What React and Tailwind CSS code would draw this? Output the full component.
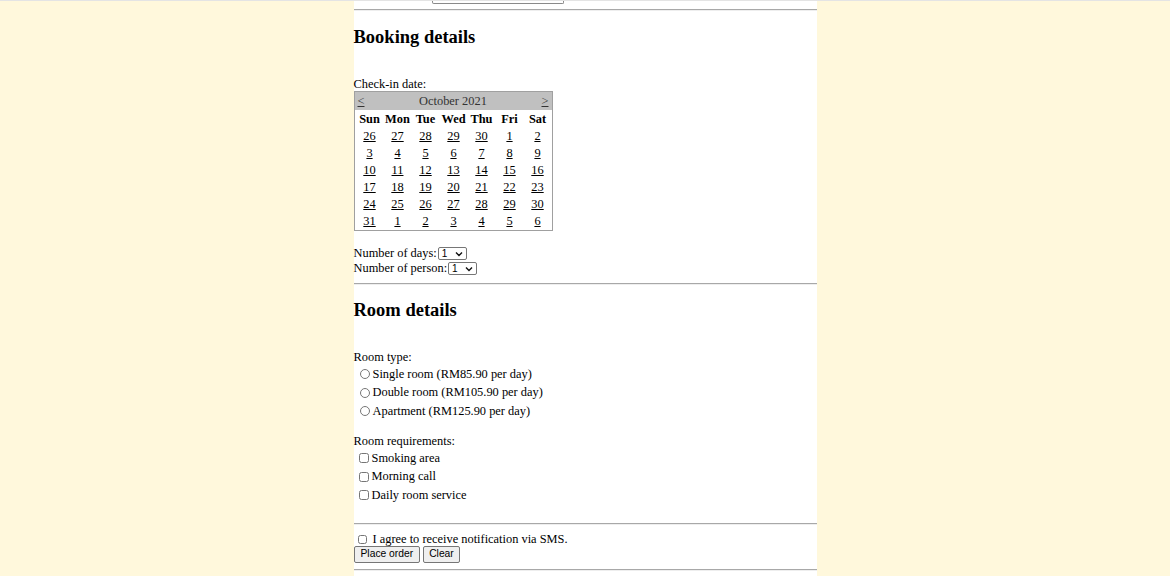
import React from 'react';

const days = ['Sun', 'Mon', 'Tue', 'Wed', 'Thu', 'Fri', 'Sat'];
const weeks = [
  [26, 27, 28, 29, 30, 1, 2],
  [3, 4, 5, 6, 7, 8, 9],
  [10, 11, 12, 13, 14, 15, 16],
  [17, 18, 19, 20, 21, 22, 23],
  [24, 25, 26, 27, 28, 29, 30],
  [31, 1, 2, 3, 4, 5, 6],
];

const rooms = [
  'Single room (RM85.90 per day)',
  'Double room (RM105.90 per day)',
  'Apartment (RM125.90 per day)',
];

const needs = ['Smoking area', 'Morning call', 'Daily room service'];

function Rule({ className = '' }) {
  return <div className={`h-[2px] border-t border-b border-t-[#a8a8a8] border-b-[#eeeeee] ${className}`} />;
}

function FakeSelect({ width }) {
  return (
    <span
      className={`inline-flex items-center justify-between h-[13px] ${width} ml-[1px] border border-[#767676] rounded-[2px] bg-white pl-[3px] pr-[3px] font-['Liberation_Sans',Arial,sans-serif] text-[10px] leading-none`}
    >
      <span>1</span>
      <svg width="8" height="6" viewBox="0 0 8 6" fill="none">
        <path d="M1 1.5 L4 4.5 L7 1.5" stroke="#111" strokeWidth="1.4" />
      </svg>
    </span>
  );
}

function Calendar() {
  return (
    <div className="w-[199px] border border-[#a0a0a0] bg-white text-[12.4px] leading-none">
      <div className="h-[18px] bg-[#c0c0c0] flex items-center justify-between px-[2px] text-[#333]">
        <span className="underline ml-[1px]">&lt;</span>
        <span className="text-center">October 2021</span>
        <span className="underline mr-[1px]">&gt;</span>
      </div>
      <div className="grid grid-cols-7 h-[18px] items-center pl-[1px]">
        {days.map((d) => (
          <span key={d} className="text-center font-bold">
            {d}
          </span>
        ))}
      </div>
      {weeks.map((w, i) => (
        <div key={i} className="grid grid-cols-7 h-[17px] items-center pl-[1px]">
          {w.map((n, j) => (
            <span key={j} className="text-center">
              <span className="underline text-black">{n}</span>
            </span>
          ))}
        </div>
      ))}
    </div>
  );
}

export default function App() {
  return (
    <div className="min-h-screen bg-[#FFF8DC] border-t border-[#e4e4e4] font-['Liberation_Serif','Times_New_Roman',serif] text-black">
      <div className="w-[463px] mx-auto bg-white min-h-[575px] text-[12.4px]">
        <div className="ml-[78px] w-[132px] h-[3px] border-x border-b border-[#8a8a8a] rounded-b-[2px]" />
        <Rule className="mt-[5px]" />

        <h2 className="mt-[16px] text-[18.5px] leading-[21px] font-bold">Booking details</h2>

        <div className="mt-[29px] leading-[14px]">Check-in date:</div>
        <Calendar />

        <div className="mt-[15px] h-[15px] flex items-center">
          <span>Number of days:</span>
          <FakeSelect width="w-[29px]" />
        </div>
        <div className="h-[15px] flex items-center">
          <span>Number of person:</span>
          <FakeSelect width="w-[29px]" />
        </div>

        <Rule className="mt-[7px]" />

        <h2 className="mt-[15px] text-[18.5px] leading-[21px] font-bold">Room details</h2>

        <div className="mt-[29px] leading-[14px]">Room type:</div>
        <div className="mt-[1px]">
          {rooms.map((r) => (
            <label key={r} className="h-[18.5px] flex items-center">
              <input type="radio" name="room" className="w-[10px] h-[10px] ml-[6px] mr-[3px]" />
              <span>{r}</span>
            </label>
          ))}
        </div>

        <div className="mt-[13.5px] leading-[14px]">Room requirements:</div>
        <div className="mt-[1px]">
          {needs.map((r) => (
            <label key={r} className="h-[18.5px] flex items-center">
              <input type="checkbox" className="w-[10px] h-[10px] ml-[5px] mr-[3px]" />
              <span>{r}</span>
            </label>
          ))}
        </div>

        <Rule className="mt-[18.5px]" />

        <label className="mt-[7px] h-[14px] flex items-center">
          <input type="checkbox" className="w-[9px] h-[9px] ml-[4px] mr-[6px]" />
          <span>I agree to receive notification via SMS.</span>
        </label>
        <div className="flex gap-[3px] font-['Liberation_Sans',Arial,sans-serif] text-[10.3px]">
          <button className="h-[17px] px-[6px] bg-[#efefef] border border-[#767676] rounded-[2px] leading-none">
            Place order
          </button>
          <button className="h-[17px] px-[5px] bg-[#efefef] border border-[#767676] rounded-[2px] leading-none">
            Clear
          </button>
        </div>
        <Rule className="mt-[6px]" />
      </div>
    </div>
  );
}
